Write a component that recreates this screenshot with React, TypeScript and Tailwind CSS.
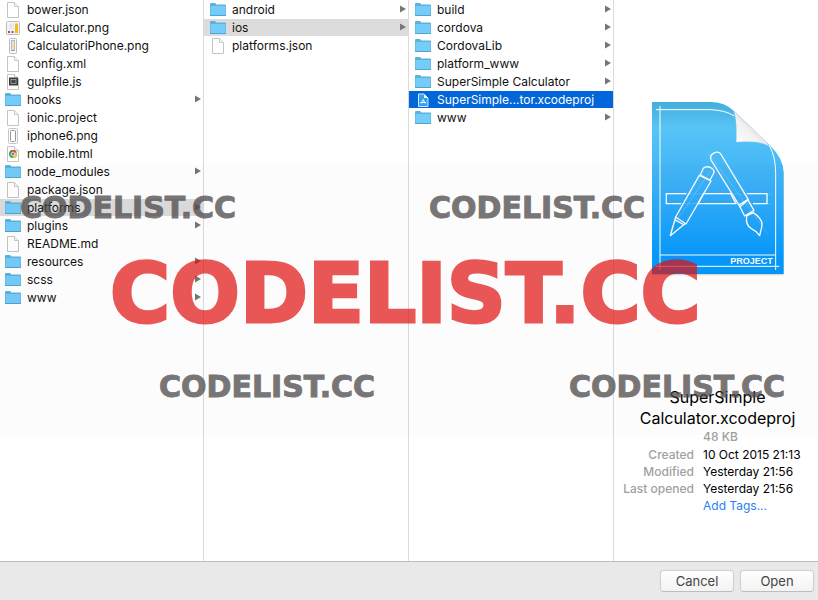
import type { ReactNode } from "react";

type Kind = "folder" | "doc" | "chart" | "phone" | "phoneOutline" | "script" | "chrome" | "xcode";
type Entry = { name: string; kind: Kind; arrow?: boolean };

const root: Entry[] = [
  { name: "bower.json", kind: "doc" },
  { name: "Calculator.png", kind: "chart" },
  { name: "CalculatoriPhone.png", kind: "phone" },
  { name: "config.xml", kind: "doc" },
  { name: "gulpfile.js", kind: "script" },
  { name: "hooks", kind: "folder", arrow: true },
  { name: "ionic.project", kind: "doc" },
  { name: "iphone6.png", kind: "phoneOutline" },
  { name: "mobile.html", kind: "chrome" },
  { name: "node_modules", kind: "folder", arrow: true },
  { name: "package.json", kind: "doc" },
  { name: "platforms", kind: "folder", arrow: true },
  { name: "plugins", kind: "folder", arrow: true },
  { name: "README.md", kind: "doc" },
  { name: "resources", kind: "folder", arrow: true },
  { name: "scss", kind: "folder", arrow: true },
  { name: "www", kind: "folder", arrow: true },
];

const platforms: Entry[] = [
  { name: "android", kind: "folder", arrow: true },
  { name: "ios", kind: "folder", arrow: true },
  { name: "platforms.json", kind: "doc" },
];

const ios: Entry[] = [
  { name: "build", kind: "folder", arrow: true },
  { name: "cordova", kind: "folder", arrow: true },
  { name: "CordovaLib", kind: "folder", arrow: true },
  { name: "platform_www", kind: "folder", arrow: true },
  { name: "SuperSimple Calculator", kind: "folder", arrow: true },
  { name: "SuperSimple...tor.xcodeproj", kind: "xcode" },
  { name: "www", kind: "folder", arrow: true },
];

function Page({ children }: { children?: ReactNode }) {
  return (
    <>
      <path d="M2.5 .5h7l4 4v11h-11z" fill="#fff" stroke="#c4c4c4" />
      <path d="M9.5 .5v4h4" fill="#f4f4f4" stroke="#c9c9c9" />
      {children}
    </>
  );
}

function EntryIcon({ kind }: { kind: Kind }) {
  let art: ReactNode;
  switch (kind) {
    case "folder":
      art = (
        <>
          <path d="M0 2q0-1 1-1h4l1.500 1.500H15q1 0 1 1V14H0z" fill="#5db2dc" />
          <path d="M.5 4h15v9.500H.5z" fill="#74ccf8" />
          <path d="M0 13.500h16" stroke="#4fa5d0" />
        </>
      );
      break;
    case "doc":
      art = <Page />;
      break;
    case "chart":
      art = (
        <>
          <rect x="1.500" y="1.500" width="13" height="13" rx="1" fill="#f6f6f6" stroke="#bdbdbd" />
          <path d="M4 3.500h5v6H4z" fill="#e4e8ee" />
          <path d="M10 3.500h3V13h-3z" fill="#f7b819" />
          <path d="M3 11h2v2H3z" fill="#d4393b" />
          <path d="M6.500 11h2v2h-2z" fill="#5865b5" />
        </>
      );
      break;
    case "phone":
      art = (
        <>
          <rect x="4.500" y=".5" width="7" height="15" rx="1" fill="#f8f8f8" stroke="#bcbcbc" />
          <rect x="6.500" y="2.500" width="3" height="10" fill="#dfe4ea" stroke="#b3bac3" />
          <path d="M9.500 5v6" stroke="#efb541" />
          <path d="M7 12.500h2" stroke="#ce7460" />
        </>
      );
      break;
    case "phoneOutline":
      art = (
        <>
          <rect x="3.500" y=".5" width="9" height="15" rx="1" fill="#fafafa" stroke="#c6c6c6" />
          <rect x="5.500" y="2.500" width="5" height="11" rx="1" fill="#fff" stroke="#999" />
        </>
      );
      break;
    case "script":
      art = (
        <Page>
          <rect x="4" y="3.500" width="9" height="8" fill="#3d3d3d" />
          <rect x="6" y="5.500" width="5" height="4" fill="#444" stroke="#ccc" strokeWidth=".6" />
        </Page>
      );
      break;
    case "chrome":
      art = (
        <Page>
          <circle cx="8" cy="8" r="4" fill="#3ba757" />
          <path d="M8 8L4.500 6a4 4 0 0 1 7 0z" fill="#df4935" />
          <path d="M8 8l3.500-2A4 4 0 0 1 8 12z" fill="#f6c52d" />
          <circle cx="8" cy="8" r="1.800" fill="#4a83d4" stroke="#fff" strokeWidth=".7" />
        </Page>
      );
      break;
    case "xcode":
      art = (
        <>
          <path d="M3.500 2h5.500l4 4v8.500H3.500z" fill="#2f9ff0" stroke="#d5ecff" />
          <path d="M9 2v4h4z" fill="#fff" />
          <path d="M6.200 11.500l2-4 2 4M5.500 10.500h5.500" fill="none" stroke="#fff" strokeWidth=".9" />
        </>
      );
  }
  return (
    <svg viewBox="0 0 16 16" className="h-4 w-4 shrink-0" aria-hidden="true">
      {art}
    </svg>
  );
}

function Column({ label, entries, selected, active, className }: {
  label: string;
  entries: Entry[];
  selected: string;
  active?: boolean;
  className: string;
}) {
  return (
    <ul aria-label={label} className={`flex shrink-0 flex-col gap-px border-r border-[#dadada] pt-px ${className}`}>
      {entries.map((e) => {
        const on = e.name === selected;
        const tone = on ? (active ? "bg-[#0066d9] text-white" : "bg-[#dcdcdc]") : "";
        return (
          <li key={e.name}>
            <button type="button" className={`flex h-[17px] w-full items-center gap-[6px] pr-[2px] text-left text-[12px] leading-[17px] ${active === undefined ? "pl-[5px]" : "pl-[6px]"} ${tone}`}>
              <EntryIcon kind={e.kind} />
              <span className="grow whitespace-nowrap">{e.name}</span>
              {e.arrow && (
                <svg viewBox="0 0 6 8" className="mb-px h-2 w-[6px] shrink-0" aria-hidden="true">
                  <path d="M0 .5L6 4 0 7.500z" fill="#777" />
                </svg>
              )}
            </button>
          </li>
        );
      })}
    </ul>
  );
}

function ProjectIcon() {
  return (
    <svg viewBox="60 30 405 531" className="h-[177px] w-[135px]" role="img" aria-label="Xcode project">
      <defs>
        <linearGradient id="sheet" x1="0" y1="0" x2="0" y2="1">
          <stop offset="0" stopColor="#43aedb" />
          <stop offset=".15" stopColor="#58c4f6" />
          <stop offset=".5" stopColor="#39b0f8" />
          <stop offset=".9" stopColor="#0798fd" />
          <stop offset="1" stopColor="#0799f8" />
        </linearGradient>
        <linearGradient id="curl" x1="0" y1="1" x2=".6" y2=".4">
          <stop offset="0" stopColor="#fff" />
          <stop offset=".7" stopColor="#f1f1f1" />
          <stop offset="1" stopColor="#d8d8d8" />
        </linearGradient>
      </defs>
      <path d="M66 38H240Q285 38 313 66L418 166Q461 208 461 250V556H66z" fill="#000" opacity=".15" />
      <path d="M66 36H240Q285 36 313 64L418 164Q461 206 461 248V552H66z" fill="url(#sheet)" />
      <g fill="none" stroke="#fff" strokeWidth="3">
        <path d="M90 48V540M78 59H240Q285 60 313 78M418 166Q437 200 437 250V540M78 529H448M90 495H437" />
      </g>
      <path d="M311 62Q322 86 319 156Q385 150 418 168Q404 148 376 124Q340 92 311 62z" fill="url(#curl)" stroke="#d5e3ea" strokeWidth="1" />
      <g fill="none" stroke="#fff" strokeWidth="4" strokeLinejoin="round">
        <path d="M169 311H109V341H153M221 311H302L318 341H204L221 311M351 311H411V341H369" />
        <path d="M208 256L243 273L168 402L137 381zM220 235Q229 226 244 234Q256 241 250 252L240 270L211 255zM137 381L121 437L165 401M134 389L163 405" />
        <path d="M243 210L330 350L355 329L274 195Q266 181 250 190Q238 197 243 210zM327 345L353 329L372 361L344 378zM350 378L370 368Q397 386 396 405Q393 422 389 437Q378 422 364 416Q346 406 350 378z" />
      </g>
      <g stroke="#fff" strokeWidth="1" opacity=".5">
        <path d="M230 182L412 430M256 222L120 420M105 312H424M105 341H424" />
      </g>
      <text x="301" y="521" fontSize="27" className="fill-white font-['Liberation_Sans',Arial,sans-serif] font-bold">PROJECT</text>
    </svg>
  );
}

function Preview() {
  const rows = [
    ["Created", "10 Oct 2015 21:13"],
    ["Modified", "Yesterday 21:56"],
    ["Last opened", "Yesterday 21:56"],
  ];
  return (
    <section aria-label="Preview" className="flex min-w-0 grow flex-col items-center pt-[100px] pl-[3px]">
      <ProjectIcon />
      <h1 className="mt-[110px] text-center text-[16px] leading-[21px] text-black">
        SuperSimple
        <br />
        Calculator.xcodeproj
      </h1>
      <p className="mb-px w-full pl-[86px] text-[12px] leading-4 font-medium text-[#a0a0a0]">48 KB</p>
      <dl className="grid w-full grid-cols-[77px_1fr] gap-x-[9px] text-[12px] leading-[17px] text-black">
        {rows.map(([k, v]) => (
          <div key={k} className="contents">
            <dt className="text-right font-medium whitespace-nowrap text-[#a0a0a0]">{k}</dt>
            <dd className="whitespace-nowrap">{v}</dd>
          </div>
        ))}
      </dl>
      <p className="w-full pl-[86px] text-[12px] leading-[17px]">
        <a href="#tags" className="text-[#2b80f5]">Add Tags...</a>
      </p>
    </section>
  );
}

function Watermark() {
  const small = "absolute text-[30px] leading-[30px] text-[#4b4848] opacity-75 [-webkit-text-stroke:1px_#4b4848]";
  return (
    <div aria-hidden="true" className="pointer-events-none absolute top-[165px] left-0 h-[270px] w-full bg-black/[0.012] font-['DejaVu_Sans',sans-serif] font-bold">
      <span className={`${small} top-[28px] left-[20px]`}>CODELIST.CC</span>
      <span className={`${small} top-[28px] left-[429px]`}>CODELIST.CC</span>
      <span className="absolute top-[88px] left-[110px] text-[82px] leading-[82px] text-[#e01010] opacity-70 [-webkit-text-stroke:3px_#e01010]">CODELIST.CC</span>
      <span className={`${small} top-[207px] left-[159px]`}>CODELIST.CC</span>
      <span className={`${small} top-[207px] left-[569px]`}>CODELIST.CC</span>
    </div>
  );
}

export default function App() {
  const button =
    "h-[22px] w-[74px] rounded-[4px] border border-[#cfcfcf] border-b-[#bdbdbd] bg-linear-to-b from-white to-[#f3f3f3] text-[13px] leading-5 text-[#444]";
  return (
    <div className="relative flex min-h-screen flex-col overflow-hidden bg-white font-['Inter',sans-serif] text-[#111]">
      <main className="flex grow">
        <Column label="Project" entries={root} selected="platforms" className="w-[204px]" />
        <Column label="platforms" entries={platforms} selected="ios" active={false} className="w-[205px]" />
        <Column label="ios" entries={ios} selected="SuperSimple...tor.xcodeproj" active className="w-[205px]" />
        <Preview />
      </main>
      <footer className="flex h-[39px] items-center justify-end gap-[6px] border-t border-[#bdbdbd] bg-[#e9e9e9] pr-1">
        <button type="button" className={button}>Cancel</button>
        <button type="button" className={button}>Open</button>
      </footer>
      <Watermark />
    </div>
  );
}
